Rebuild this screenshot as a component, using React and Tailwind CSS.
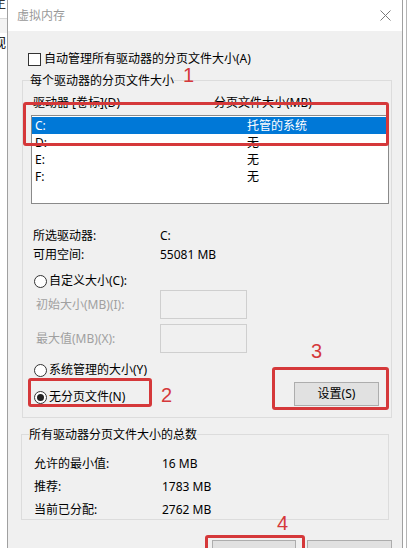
import React from 'react';

const drives = [
  { name: 'C:', size: '托管的系统', selected: true },
  { name: 'D:', size: '无' },
  { name: 'E:', size: '无' },
  { name: 'F:', size: '无' },
];

const totals = [
  { label: '允许的最小值:', value: '16 MB' },
  { label: '推荐:', value: '1783 MB' },
  { label: '当前已分配:', value: '2762 MB' },
];

const Checkbox = () => (
  <div className="h-[13px] w-[13px] shrink-0 border border-[#333] bg-white" />
);

const Radio = ({ checked }) => (
  <div className="flex h-[13px] w-[13px] shrink-0 items-center justify-center rounded-full border border-[#333] bg-white">
    {checked && <div className="h-[7px] w-[7px] rounded-full bg-[#222]" />}
  </div>
);

const RadioRow = ({ label, checked }) => (
  <div className="flex h-[18px] items-center gap-[2px] pl-[11px]">
    <Radio checked={checked} />
    <span>{label}</span>
  </div>
);

const Mark = ({ className }) => (
  <div className={`absolute rounded-[3px] border-[3px] border-[#d5383a] ${className}`} />
);

const Num = ({ className, children }) => (
  <div className={`absolute font-['Liberation_Sans',sans-serif] text-[20px] leading-[20px] text-[#d5383a] ${className}`}>
    {children}
  </div>
);

export default function App() {
  return (
    <div className="relative flex h-[548px] w-[410px] overflow-hidden bg-white font-['Noto_Sans','Noto_Sans_CJK_SC',sans-serif] text-[12px] leading-[18px] text-black">
      {/* window behind the dialog */}
      <div className="flex w-[7px] shrink-0 flex-col overflow-hidden">
        <div className="h-[19px] whitespace-nowrap border-b border-[#d8d8d8] -ml-[6px] text-[12px] leading-[8px] text-[#333]">主</div>
        <div className="h-[14px] bg-[#f3f3f3]" />
        <div className="whitespace-nowrap -ml-[7px] text-[13px] leading-[18px]">视</div>
      </div>

      <div className="flex w-[396px] shrink-0 flex-col border-x border-[#a0a0a0] bg-[#f0f0f0]">
        <div className="flex h-[31px] shrink-0 items-center justify-between bg-white pl-[9px] pr-[11px]">
          <span className="text-[#999]">虚拟内存</span>
          <svg width="11" height="11" viewBox="0 0 11 11">
            <path d="M0.5 0.5 L10.5 10.5 M10.5 0.5 L0.5 10.5" stroke="#7a7a7a" strokeWidth="1" fill="none" />
          </svg>
        </div>

        <div className="pt-[19px]">
          <div className="flex h-[18px] items-center gap-[3px] pl-[20px]">
            <Checkbox />
            <span>自动管理所有驱动器的分页文件大小(A)</span>
          </div>

          <fieldset className="ml-[14px] mt-[4px] w-[370px] border border-[#dcdcdc] pb-[11px]">
            <legend className="ml-[7px] leading-[17px]">每个驱动器的分页文件大小</legend>

            <div className="mt-[6px] flex h-[16px] items-center pl-[10px] leading-[16px]">
              <span className="w-[181px]">驱动器 [卷标](D)</span>
              <span>分页文件大小(MB)</span>
            </div>

            <div className="ml-[8px] mt-[4px] h-[89px] w-[358px] border border-[#8a8a8a] bg-white pr-[1px] pt-[1px]">
              {drives.map((d) => (
                <div
                  key={d.name}
                  className={`flex h-[17px] items-center leading-[17px] ${d.selected ? 'bg-[#0078d7] text-white' : ''}`}
                >
                  <span className="w-[215px] pl-[3px]">{d.name}</span>
                  <span>{d.size}</span>
                </div>
              ))}
            </div>

            <div className="mt-[22px] flex h-[19px] items-center pl-[10px]">
              <span className="w-[127px]">所选驱动器:</span>
              <span>C:</span>
            </div>
            <div className="flex h-[19px] items-center pl-[10px]">
              <span className="w-[127px]">可用空间:</span>
              <span>55081 MB</span>
            </div>

            <div className="mt-[8px]">
              <RadioRow label="自定义大小(C):" />
            </div>
            <div className="flex h-[29px] items-center pl-[13px] text-[#a0a0a0]">
              <span className="w-[124px]">初始大小(MB)(I):</span>
              <div className="h-[29px] w-[87px] border border-[#cfcfcf]" />
            </div>
            <div className="mt-[5px] flex h-[29px] items-center pl-[13px] text-[#a0a0a0]">
              <span className="w-[124px]">最大值(MB)(X):</span>
              <div className="h-[29px] w-[87px] border border-[#cfcfcf]" />
            </div>

            <div className="mt-[8px] flex items-end justify-between pr-[12px]">
              <div className="flex flex-col gap-[9px]">
                <RadioRow label="系统管理的大小(Y)" />
                <RadioRow label="无分页文件(N)" checked />
              </div>
              <div className="flex h-[24px] w-[85px] items-center justify-center border border-[#adadad] bg-[#e1e1e1]">
                设置(S)
              </div>
            </div>
          </fieldset>

          <fieldset className="ml-[13px] mt-[8px] w-[368px] border border-[#dcdcdc]">
            <legend className="ml-[7px] leading-[17px]">所有驱动器分页文件大小的总数</legend>
            <div className="mt-[12px] flex flex-col gap-[5px]">
              {totals.map((t) => (
                <div key={t.label} className="flex h-[18px] items-center pl-[12px]">
                  <span className="w-[128px]">{t.label}</span>
                  <span>{t.value}</span>
                </div>
              ))}
            </div>
          </fieldset>

          <div className="mt-[20px] flex justify-end gap-[11px] pr-[10px]">
            <div className="flex h-[32px] w-[84px] items-center justify-center border border-[#adadad] bg-[#e1e1e1]">确定</div>
            <div className="flex h-[32px] w-[85px] items-center justify-center border border-[#adadad] bg-[#e1e1e1]">取消</div>
          </div>
        </div>
      </div>

      <div className="flex w-[7px] shrink-0 pl-[3px]">
        <div className="w-px bg-[#b4b4b4]" />
      </div>

      {/* annotations */}
      <Mark className="left-[23px] top-[102px] h-[44px] w-[366px]" />
      <Num className="left-[183px] top-[65px]">1</Num>
      <Mark className="left-[28px] top-[378px] h-[29px] w-[124px]" />
      <Num className="left-[161px] top-[385px]">2</Num>
      <Mark className="left-[272px] top-[367px] h-[43px] w-[117px]" />
      <Num className="left-[311px] top-[341px]">3</Num>
      <Mark className="left-[205px] top-[535px] h-[30px] w-[100px]" />
      <Num className="left-[277px] top-[513px]">4</Num>
    </div>
  );
}
